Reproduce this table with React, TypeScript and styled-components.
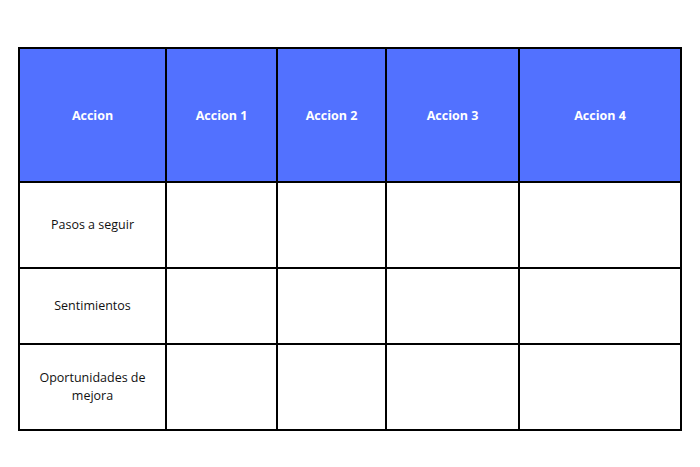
import styled, { createGlobalStyle } from 'styled-components';

const GlobalStyle = createGlobalStyle`
  html, body {
    margin: 0;
    padding: 0;
    background: #ffffff;
  }
  body {
    font-family: 'Open Sans', 'Noto Sans', sans-serif;
  }
`;

const Page = styled.div`
  width: 700px;
  height: 467px;
  padding: 47px 0 0 18px;
  box-sizing: border-box;
`;

const Table = styled.table`
  border-collapse: collapse;
  table-layout: fixed;
  width: 664px;
  border: 2px solid #000;
`;

const HeadCell = styled.th`
  height: 132px;
  padding: 0;
  background: #5271ff;
  color: #ffffff;
  font-size: 12.5px;
  font-weight: 700;
  text-align: center;
  vertical-align: middle;
  border: 2px solid #000;
`;

const Cell = styled.td<{ $h: number }>`
  height: ${(p) => p.$h}px;
  padding: 0 8px;
  color: #111111;
  font-size: 12.5px;
  line-height: 18px;
  text-align: center;
  vertical-align: middle;
  border: 2px solid #000;
`;

const widths = [147, 111, 109, 133, 162];
const headers = ['Accion', 'Accion 1', 'Accion 2', 'Accion 3', 'Accion 4'];
const rows = [
  { label: 'Pasos a seguir', h: 84 },
  { label: 'Sentimientos', h: 74 },
  { label: 'Oportunidades de mejora', h: 84 },
];

export default function App() {
  return (
    <>
      <GlobalStyle />
      <Page>
        <Table>
          <colgroup>
            {widths.map((w, i) => (
              <col key={i} style={{ width: w }} />
            ))}
          </colgroup>
          <thead>
            <tr>
              {headers.map((h) => (
                <HeadCell key={h}>{h}</HeadCell>
              ))}
            </tr>
          </thead>
          <tbody>
            {rows.map((r) => (
              <tr key={r.label}>
                <Cell $h={r.h}>{r.label}</Cell>
                <Cell $h={r.h} />
                <Cell $h={r.h} />
                <Cell $h={r.h} />
                <Cell $h={r.h} />
              </tr>
            ))}
          </tbody>
        </Table>
      </Page>
    </>
  );
}
